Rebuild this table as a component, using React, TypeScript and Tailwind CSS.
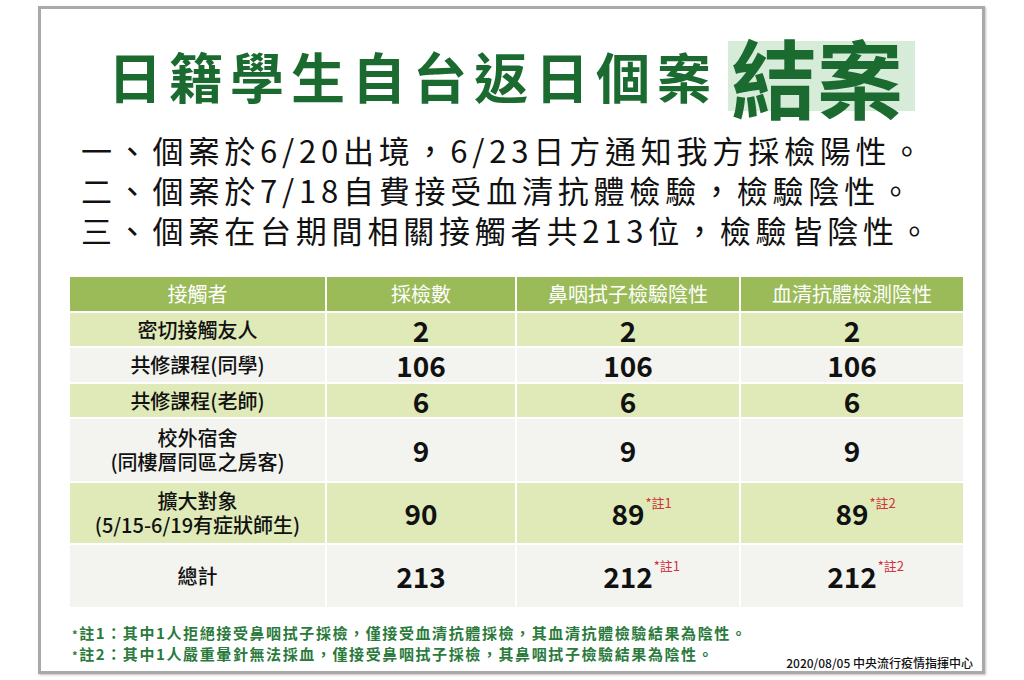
const CJK = "font-['Noto_Sans_CJK_TC','Noto_Sans_CJK_JP',sans-serif]";

type Cell = { v: string; note?: string };
type Row = { label: string[]; cells: Cell[]; h: string; bg: string };

const ROWS: Row[] = [
  { label: ["密切接觸友人"], cells: [{ v: "2" }, { v: "2" }, { v: "2" }], h: "h-[33px]", bg: "bg-[#dfeab8]" },
  { label: ["共修課程(同學)"], cells: [{ v: "106" }, { v: "106" }, { v: "106" }], h: "h-[34px]", bg: "bg-[#f3f4ef]" },
  { label: ["共修課程(老師)"], cells: [{ v: "6" }, { v: "6" }, { v: "6" }], h: "h-[33px]", bg: "bg-[#dfeab8]" },
  {
    label: ["校外宿舍", "(同樓層同區之房客)"],
    cells: [{ v: "9" }, { v: "9" }, { v: "9" }],
    h: "h-[62px]",
    bg: "bg-[#f3f4ef]",
  },
  {
    label: ["擴大對象", "(5/15-6/19有症狀師生)"],
    cells: [{ v: "90" }, { v: "89", note: "*註1" }, { v: "89", note: "*註2" }],
    h: "h-[60px]",
    bg: "bg-[#dfeab8]",
  },
  {
    label: ["總計"],
    cells: [{ v: "213" }, { v: "212", note: "*註1" }, { v: "212", note: "*註2" }],
    h: "h-[62px]",
    bg: "bg-[#f3f4ef]",
  },
];

const HEAD = ["接觸者", "採檢數", "鼻咽拭子檢驗陰性", "血清抗體檢測陰性"];

function Num({ cell }: { cell: Cell }) {
  return (
    <span className="relative inline-block text-[28px] font-bold leading-none text-[#111]">
      {cell.v}
      {cell.note && (
        <span className="absolute left-full top-[-3px] ml-[1px] whitespace-nowrap text-[13px] font-normal leading-none text-[#d3303b]">
          {cell.note}
        </span>
      )}
    </span>
  );
}

export default function App() {
  return (
    <div className={`h-[680px] w-[1024px] bg-white ${CJK}`}>
      <div className="relative ml-[38px] mt-[6px] flex h-[668px] w-[947px] flex-col border-[3px] border-[#a9a9a9] shadow-[1px_1px_2px_rgba(0,0,0,0.25)]">
        {/* Title */}
        <div className="mt-[32px] flex h-[70px] items-center pl-[67px]">
          <span className="text-[54px] font-bold leading-none tracking-[7px] text-[#1b6b30]">
            日籍學生自台返日個案
          </span>
          <span className="ml-[10px] flex h-[70px] w-[187px] items-center bg-[#d6ebd8] pl-[3px] text-[86px] font-bold leading-[70px] text-[#1b6b30]">
            結案
          </span>
        </div>

        {/* Summary */}
        <div className="mt-[19px] pl-[40px] text-[31px] leading-[40px] tracking-[4.8px] text-[#111]">
          <div>一、個案於6/20出境，6/23日方通知我方採檢陽性。</div>
          <div>二、個案於7/18自費接受血清抗體檢驗，檢驗陰性。</div>
          <div>三、個案在台期間相關接觸者共213位，檢驗皆陰性。</div>
        </div>

        {/* Table */}
        <div className="ml-[29px] mt-[27px] grid w-[887px] grid-cols-[255px_188px_222px_222px] gap-[2px] bg-white">
          {HEAD.map((h) => (
            <div
              key={h}
              className="flex h-[34px] items-center justify-center bg-[#9bbb59] text-[20px] leading-none text-white"
            >
              {h}
            </div>
          ))}
          {ROWS.map((r) => (
            <div key={r.label.join("")} className="contents">
              <div
                className={`flex ${r.h} ${r.bg} flex-col items-center justify-center text-[20px] font-medium leading-[24px] text-[#111]`}
              >
                {r.label.map((l) => (
                  <span key={l}>{l}</span>
                ))}
              </div>
              {r.cells.map((c, i) => (
                <div key={i} className={`flex ${r.h} ${r.bg} items-center justify-center`}>
                  <Num cell={c} />
                </div>
              ))}
            </div>
          ))}
        </div>

        {/* Notes */}
        <div className="mt-[16px] flex items-end justify-between pl-[31px] pr-[9px]">
          <div className="pb-[6px] text-[15px] font-semibold leading-[20px] tracking-[1.6px] text-[#2a7a3c]">
            <div>
              <span className="text-[11px]">*</span>註1：其中1人拒絕接受鼻咽拭子採檢，僅接受血清抗體採檢，其血清抗體檢驗結果為陰性。
            </div>
            <div>
              <span className="text-[11px]">*</span>註2：其中1人嚴重暈針無法採血，僅接受鼻咽拭子採檢，其鼻咽拭子檢驗結果為陰性。
            </div>
          </div>
          <div className="whitespace-nowrap text-[12px] font-medium leading-[16px] text-[#111]">
            2020/08/05 中央流行疫情指揮中心
          </div>
        </div>
      </div>
    </div>
  );
}
